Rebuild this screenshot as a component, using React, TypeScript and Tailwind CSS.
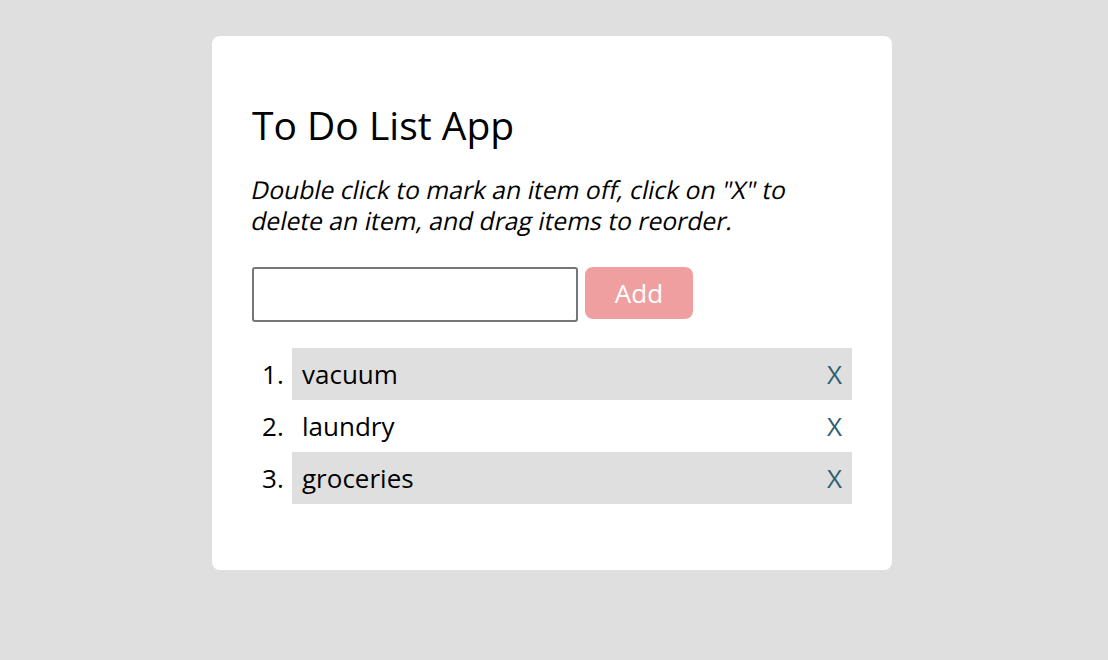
import React from "react";

const items = ["vacuum", "laundry", "groceries"];

export default function App() {
  return (
    <div className="min-h-[660px] w-full bg-[#dfdfdf] pt-[36px]" style={{ fontFamily: '"Open Sans", sans-serif' }}>
      <div className="ml-[212px] w-[680px] rounded-[8px] bg-white px-[40px] pt-[65px] pb-[66px]">
        <h1 className="text-[39px] leading-[47px] text-black">To Do List App</h1>
        <p className="mt-[26px] text-[24.7px] leading-[31px] text-black">
          <span className="block origin-left skew-x-[-12deg]">Double click to mark an item off, click on "X" to</span>
          <span className="block origin-left skew-x-[-12deg]">delete an item, and drag items to reorder.</span>
        </p>
        <div className="mt-[31px] flex items-start gap-[7px]">
          <input className="h-[55px] w-[326px] rounded-[3px] border-2 border-[#767676] outline-none" />
          <button className="h-[52px] w-[108px] rounded-[8px] bg-[#ef9f9f] text-[26px] text-white">Add</button>
        </div>
        <ol className="mt-[26px] pl-[40px] text-[26px] text-black">
          {items.map((it, i) => (
            <li key={it} className={`relative flex h-[52px] items-center justify-between pl-[10px] pr-[10px] ${i % 2 === 0 ? "bg-[#dfdfdf]" : ""}`}>
              <span className="absolute left-[-30px]">{i + 1}.</span>
              <span>{it}</span>
              <span className="text-[#2f6070]">X</span>
            </li>
          ))}
        </ol>
      </div>
    </div>
  );
}
